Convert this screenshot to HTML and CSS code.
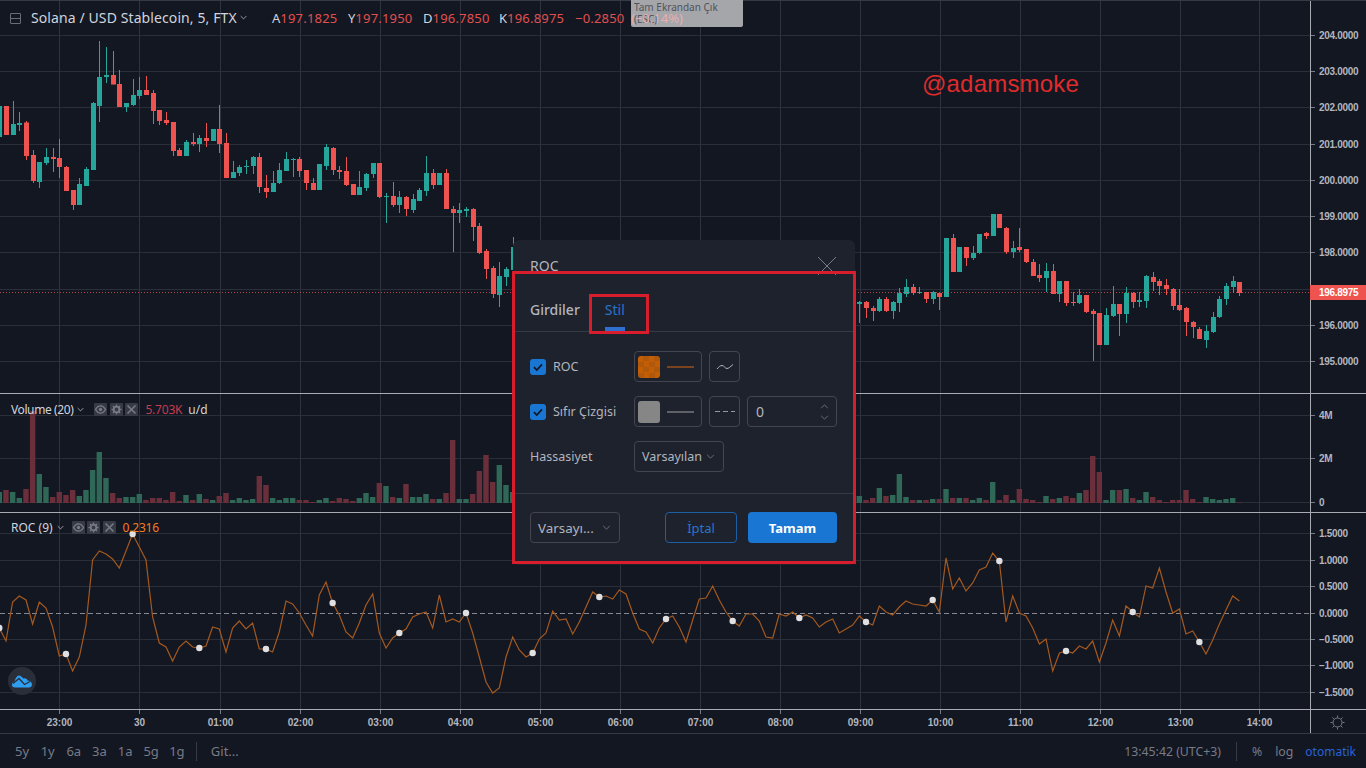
FILE: index.html
```html
<!DOCTYPE html>
<html lang="tr">
<head>
  <meta charset="UTF-8" />
  <meta name="viewport" content="width=device-width, initial-scale=1.0" />
  <title>Solana / USD Stablecoin</title>
  <link rel="stylesheet" href="styles.css">
</head>
<body>

  <svg class="icon-defs" width="0" height="0">
    <symbol id="icon-eye" viewBox="0 0 13 13">
      <path d="M1.500 6.500C3 3.800 4.600 2.800 6.500 2.800s3.500 1 5 3.700c-1.500 2.700-3.100 3.700-5 3.700s-3.500-1-5-3.700z" fill="none" stroke="currentColor" stroke-width="1.300" />
      <circle cx="6.500" cy="6.500" r="1.700" fill="currentColor" />
    </symbol>
    <symbol id="icon-gear" viewBox="0 0 13 13">
      <circle cx="6.500" cy="6.500" r="2.800" fill="none" stroke="currentColor" stroke-width="1.800" />
      <path d="M6.500 1.500v2M6.500 9.500v2M1.500 6.500h2M9.500 6.500h2M3 3l1.400 1.400M8.600 8.600 10 10M10 3 8.600 4.400M4.400 8.600 3 10" stroke="currentColor" stroke-width="1.400" />
    </symbol>
    <symbol id="icon-close" viewBox="0 0 13 13">
      <path d="M2.500 2.500l8 8M10.500 2.500l-8 8" stroke="currentColor" stroke-width="1.600" />
    </symbol>
    <symbol id="icon-chevron" viewBox="0 0 10 6">
      <path d="M1 1l4 4 4-4" fill="none" stroke="currentColor" stroke-width="1" />
    </symbol>
    <symbol id="icon-check" viewBox="0 0 16 16">
      <path d="M4 8.200l2.800 2.800L12 5.400" fill="none" stroke="#131722" stroke-width="1.700" />
    </symbol>
  </svg>

  <div class="tv-chart">

    <!-- Fiyat paneli -->
    <div class="pane pane-main">
      <svg id="mainPlot" class="plot" viewBox="0 1 1366 392"></svg>

      <div class="fullscreen-hint">Tam Ekrandan Çık<br>(ESC)</div>

      <div class="legend legend-main">
        <span class="collapse-box"></span>
        <span class="legend-title">Solana / USD Stablecoin, 5, FTX</span>
        <svg class="chevron"><use href="#icon-chevron" /></svg>
        <span class="ohlc ohlc-a">A<b>197.1825</b></span>
        <span class="ohlc ohlc-y">Y<b>197.1950</b></span>
        <span class="ohlc ohlc-d">D<b>196.7850</b></span>
        <span class="ohlc ohlc-k">K<b>196.8975</b></span>
        <span class="ohlc ohlc-diff"><b>−0.2850</b></span>
        <span class="ohlc ohlc-pct">(−0.14%)</span>
      </div>

      <div class="watermark">@adamsmoke</div>
    </div>

    <!-- Hacim paneli -->
    <div class="pane pane-volume">
      <svg id="volumePlot" class="plot" viewBox="0 394 1366 118"></svg>
      <div class="legend legend-study">
        <span class="study-name study-name-volume">Volume (20)</span>
        <svg class="chevron"><use href="#icon-chevron" /></svg>
        <span class="study-tools study-tools-volume">
          <span class="tool-box"><svg><use href="#icon-eye" /></svg></span>
          <span class="tool-box"><svg><use href="#icon-gear" /></svg></span>
          <span class="tool-box"><svg><use href="#icon-close" /></svg></span>
        </span>
        <span class="study-value volume-value">5.703K</span>
        <span class="study-unit">u/d</span>
      </div>
    </div>

    <!-- ROC paneli -->
    <div class="pane pane-roc">
      <svg id="rocPlot" class="plot" viewBox="0 513 1366 196"></svg>
      <div class="legend legend-study">
        <span class="study-name">ROC (9)</span>
        <svg class="chevron"><use href="#icon-chevron" /></svg>
        <span class="study-tools">
          <span class="tool-box"><svg><use href="#icon-eye" /></svg></span>
          <span class="tool-box"><svg><use href="#icon-gear" /></svg></span>
          <span class="tool-box"><svg><use href="#icon-close" /></svg></span>
        </span>
        <span class="study-value roc-value">0.2316</span>
      </div>
      <div class="tv-logo">
        <svg width="20" height="13" viewBox="0 0 20 13">
          <path d="M0 10C0 8 1 7 2.500 6.500 3.500 3 5 .5 7 .5c2 0 3 2 4.500 3 1.500-.5 3.500 0 4 2 2.500 0 4.500 2 4.500 4s-1.500 3-3 3H3c-2 0-3-1-3-2.500z" fill="#2e9ef0" />
          <path d="M1 8.500 7 3.500l5.500 6L18 6.500" fill="none" stroke="#2a2e39" stroke-width="1.300" />
        </svg>
      </div>
    </div>

    <!-- Zaman ekseni -->
    <div class="pane pane-time">
      <svg id="timeAxis" class="plot" viewBox="0 710 1366 23"></svg>
    </div>

    <!-- Alt çubuk -->
    <div class="bottom-bar">
      <div class="range-group">
        <span class="range-item">5y</span>
        <span class="range-item">1y</span>
        <span class="range-item">6a</span>
        <span class="range-item">3a</span>
        <span class="range-item">1a</span>
        <span class="range-item">5g</span>
        <span class="range-item">1g</span>
        <span class="bar-divider"></span>
        <span class="range-goto">Git...</span>
      </div>
      <div class="status-group">
        <span>13:45:42 (UTC+3)</span>
        <span class="bar-divider"></span>
        <span class="status-pct">%</span>
        <span class="status-log">log</span>
        <span class="status-auto">otomatik</span>
      </div>
    </div>
  </div>

  <!-- Ayarlar penceresi -->
  <div class="dialog">
    <div class="dialog-header">
      <span class="dialog-title">ROC</span>
      <svg class="dialog-close" width="20" height="20" viewBox="0 0 20 20">
        <path d="M1 1l18 18M19 1 1 19" stroke="#787b86" stroke-width="1" fill="none" />
      </svg>
    </div>

    <div class="dialog-tabs">
      <span class="tab">Girdiler</span>
      <span class="tab tab-active">Stil</span>
    </div>

    <div class="dialog-body">
      <div class="field-row">
        <label class="field-label">
          <span class="checkbox"><svg><use href="#icon-check" /></svg></span>
          ROC
        </label>
        <span class="field-controls">
          <span class="swatch-button">
            <span class="swatch swatch-orange"></span>
            <span class="swatch-line swatch-line-orange"></span>
          </span>
          <span class="square-button">
            <svg width="18" height="10" viewBox="0 0 18 10">
              <path d="M1 7c2-2.500 3.500-3.500 5-3.500 2 0 3 3 5 3 1.500 0 3-1.500 6-4" fill="none" stroke="#b2b5be" stroke-width="1" />
            </svg>
          </span>
        </span>
      </div>

      <div class="field-row">
        <label class="field-label">
          <span class="checkbox"><svg><use href="#icon-check" /></svg></span>
          Sıfır Çizgisi
        </label>
        <span class="field-controls">
          <span class="swatch-button">
            <span class="swatch swatch-gray"></span>
            <span class="swatch-line"></span>
          </span>
          <span class="square-button"><span class="dash-sample"></span></span>
          <span class="number-input">
            <span>0</span>
            <span class="stepper">
              <svg class="step-up"><use href="#icon-chevron" /></svg>
              <svg><use href="#icon-chevron" /></svg>
            </span>
          </span>
        </span>
      </div>

      <div class="field-row">
        <span class="field-label">Hassasiyet</span>
        <span class="field-controls">
          <span class="select-box select-precision">Varsayılan
            <svg class="chevron"><use href="#icon-chevron" /></svg>
          </span>
        </span>
      </div>
    </div>

    <div class="dialog-footer">
      <span class="select-box select-template">Varsayı...
        <svg class="chevron"><use href="#icon-chevron" /></svg>
      </span>
      <span class="footer-buttons">
        <button class="btn btn-cancel">İptal</button>
        <button class="btn btn-ok">Tamam</button>
      </span>
    </div>

    <div class="mark-outer"></div>
    <div class="mark-tab"></div>
  </div>

  <script src="chart.js"></script>
</body>
</html>
```

FILE: styles.css
```css
body {
  margin: 0;
  padding: 0;
  background-color: #131722;
  font-family: "Noto Sans", Arial, sans-serif;
  color: #b2b5be;
  overflow: hidden;
}

.icon-defs {
  position: absolute;
}

.tv-chart {
  width: 1366px;
  height: 768px;
  display: flex;
  flex-direction: column;
}

.pane {
  position: relative;
  box-sizing: border-box;
  border-bottom: 1px solid #a9abb2;
}

.pane-main {
  height: 394px;
  border-top: 1px solid #363a45;
}

.pane-volume {
  height: 119px;
}

.pane-roc {
  height: 197px;
}

.pane-time {
  height: 24px;
  border-bottom-color: #363a45;
}

.plot {
  display: block;
  width: 1366px;
  height: 100%;
}

.axis-text {
  font-family: "Liberation Sans", Arial, sans-serif;
  font-size: 10px;
  font-weight: bold;
  letter-spacing: -0.3px;
  fill: #b2b5be;
}

.axis-last {
  fill: #fff;
}

.time-text {
  letter-spacing: 0;
  text-anchor: middle;
}

/* Legendlar */
.legend {
  position: absolute;
  left: 0;
  top: 0;
  white-space: nowrap;
}

.legend-main {
  width: 760px;
  height: 34px;
  z-index: 2;
  font-size: 13px;
  line-height: 34px;
  color: #d1d4dc;
}

.collapse-box {
  position: absolute;
  left: 10px;
  top: 12px;
  width: 9px;
  height: 9px;
  border: 1px solid #6a6d78;
  border-radius: 1px;
}

.collapse-box::after {
  content: "";
  position: absolute;
  left: 0;
  right: 0;
  top: 4px;
  height: 1px;
  background-color: #6a6d78;
}

.legend-title {
  position: absolute;
  left: 31px;
  font-size: 14px;
  letter-spacing: 0.1px;
}

.legend-main .chevron {
  position: absolute;
  left: 240px;
  top: 14px;
}

.chevron {
  width: 7px;
  height: 5px;
}

.ohlc {
  position: absolute;
}

.ohlc b {
  font-weight: normal;
  letter-spacing: 0.2px;
  color: #e0504e;
}

.ohlc-a { left: 272px; }
.ohlc-y { left: 348px; }
.ohlc-d { left: 423px; }
.ohlc-k { left: 499px; }
.ohlc-diff { left: 575px; }

.ohlc-pct {
  left: 631px;
  color: #e6aeb0;
}

.fullscreen-hint {
  position: absolute;
  left: 631px;
  top: -1px;
  z-index: 1;
  box-sizing: border-box;
  width: 112px;
  height: 27px;
  padding: 1px 3px;
  background-color: #a5a6aa;
  border-radius: 0 0 2px 2px;
  font-size: 10px;
  line-height: 12px;
  color: #50525a;
}

.watermark {
  position: absolute;
  left: 922px;
  top: 68px;
  font-family: "Liberation Sans", Arial, sans-serif;
  font-size: 24px;
  letter-spacing: 0.2px;
  line-height: 30px;
  color: #e02b2b;
}

.legend-study {
  display: flex;
  align-items: center;
  left: 11px;
  top: 8px;
  height: 14px;
  font-size: 12px;
  color: #d1d4dc;
}

.pane-roc .legend-study {
  top: 7px;
}

.study-name-volume {
  letter-spacing: -0.4px;
}

.legend-study .chevron {
  margin-left: 4px;
}

.study-tools {
  display: flex;
  gap: 2.500px;
  margin-left: 8px;
}

.study-tools-volume {
  margin-left: 10px;
}

.tool-box {
  width: 13px;
  height: 13px;
  background-color: #363a45;
  color: #787b86;
  border-radius: 1px;
}

.tool-box svg {
  display: block;
  width: 13px;
  height: 13px;
}

.study-value {
  margin-left: 7px;
  letter-spacing: -0.2px;
}

.volume-value {
  color: #c73a50;
}

.roc-value {
  color: #f57c1f;
}

.study-unit {
  margin-left: 6px;
}

.tv-logo {
  position: absolute;
  left: 8px;
  top: 154px;
  width: 28px;
  height: 28px;
  display: flex;
  align-items: center;
  justify-content: center;
  background-color: #2a2e39;
  border-radius: 50%;
}

/* Alt çubuk */
.bottom-bar {
  flex: 1;
  display: flex;
  justify-content: space-between;
  align-items: center;
  padding: 0 10px 0 15px;
  font-size: 13px;
  color: #787b86;
}

.range-group,
.status-group {
  display: flex;
  align-items: center;
}

.range-item {
  width: 25.700px;
}

.bar-divider {
  width: 1px;
  height: 19px;
  background-color: #363a45;
}

.range-group .bar-divider {
  margin: 0 14px 0 1px;
}

.status-group {
  font-size: 12.300px;
}

.status-group .bar-divider {
  margin: 0 15px;
}

.status-log {
  margin-left: 13px;
}

.status-auto {
  margin-left: 12px;
  font-size: 12px;
  color: #2962d6;
}

/* Ayarlar penceresi */
.dialog {
  position: absolute;
  left: 513px;
  top: 240px;
  box-sizing: border-box;
  width: 342px;
  height: 325px;
  background-color: #1e222d;
  border-radius: 6px;
  font-size: 12.500px;
  color: #b2b5be;
}

.dialog-header {
  display: flex;
  justify-content: space-between;
  align-items: flex-start;
  box-sizing: border-box;
  height: 54px;
  padding: 16px 18px 0 17px;
}

.dialog-title {
  font-size: 14px;
  line-height: 19px;
}

.dialog-tabs {
  display: flex;
  gap: 25px;
  box-sizing: border-box;
  height: 38px;
  padding-left: 17px;
  border-bottom: 1px solid #363a45;
  font-size: 14px;
}

.tab {
  position: relative;
  line-height: 31px;
  font-weight: 500;
}

.tab-active {
  color: #2a74c9;
  font-weight: normal;
}

.tab-active::after {
  content: "";
  position: absolute;
  left: 0;
  right: 0;
  bottom: 0;
  height: 4px;
  background-color: #2f6fd0;
}

.dialog-body {
  display: flex;
  flex-direction: column;
  gap: 14px;
  padding: 19px 18px 21px 17px;
  border-bottom: 1px solid #363a45;
}

.field-row {
  display: grid;
  grid-template-columns: 104px 1fr;
  align-items: center;
  height: 31px;
}

.field-label {
  display: flex;
  align-items: center;
  gap: 7px;
}

.field-controls {
  display: flex;
  gap: 7px;
}

.checkbox {
  width: 16px;
  height: 16px;
  background-color: #1976d2;
  border-radius: 3px;
}

.checkbox svg {
  display: block;
  width: 16px;
  height: 16px;
}

.swatch-button,
.square-button,
.number-input,
.select-box {
  display: flex;
  align-items: center;
  box-sizing: border-box;
  height: 31px;
  border: 1px solid #434651;
  border-radius: 4px;
}

.swatch-button {
  width: 68px;
  padding: 0 7px 0 3px;
  gap: 7px;
}

.swatch {
  width: 22px;
  height: 22px;
  border-radius: 3px;
}

.swatch-orange {
  background-color: #c45e05;
  background-image: conic-gradient(#b0590c 25%, transparent 0 50%, #b0590c 0 75%, transparent 0);
  background-size: 11px 11px;
}

.swatch-gray {
  background-color: #868686;
}

.swatch-line {
  flex: 1;
  height: 2px;
  background-color: #5f6168;
}

.swatch-line-orange {
  background-color: #7a4320;
}

.square-button {
  justify-content: center;
  width: 31px;
}

.dash-sample {
  width: 20px;
  height: 1px;
  background-image: repeating-linear-gradient(90deg, #9598a1 0 5px, transparent 5px 8px);
}

.number-input {
  justify-content: space-between;
  width: 90px;
  padding: 0 7px 0 8px;
  font-size: 14px;
}

.stepper {
  display: flex;
  flex-direction: column;
  gap: 6px;
  color: #787b86;
}

.stepper svg {
  display: block;
  width: 9px;
  height: 5px;
}

.step-up {
  transform: rotate(180deg);
}

.select-box {
  justify-content: space-between;
  padding: 0 8px 0 7px;
  width: 90px;
}

.select-template {
  font-size: 13.400px;
}

.select-box .chevron {
  width: 9px;
  color: #787b86;
}

.dialog-footer {
  display: flex;
  justify-content: space-between;
  padding: 18px 18px 0 17px;
}

.footer-buttons {
  display: flex;
  gap: 11px;
}

.btn {
  box-sizing: border-box;
  height: 31px;
  font-family: inherit;
  font-size: 13px;
  border-radius: 4px;
  cursor: pointer;
}

.btn-cancel {
  width: 72px;
  background-color: transparent;
  border: 1px solid #1d5fa5;
  color: #2a74c9;
}

.btn-ok {
  width: 89px;
  background-color: #1976d2;
  border: none;
  color: #fff;
  font-weight: bold;
}

/* Kırmızı işaretler */
.mark-outer,
.mark-tab {
  position: absolute;
  box-sizing: border-box;
  border: 3px solid #d81e2c;
  pointer-events: none;
}

.mark-outer {
  left: -1px;
  top: 31px;
  width: 344px;
  height: 293px;
}

.mark-tab {
  left: 76px;
  top: 54px;
  width: 60px;
  height: 40px;
}
```

FILE: chart.js
```js
// Mum verileri: [tepe, gövde üst, gövde alt, dip, yön] (piksel, 1 = yükseliş)
const leftCandles = [
  [106,106,137,137,1],[106,106,135,135,0],[101,124,135,135,1],[112,123,125,131,1],[121,122.5,156,160,0],
  [150,155,181,183,0],[162,162,182,188,1],[148,157,163,165,1],[148,157,159,172,0],[139,158,167,178,0],
  [166,167,191,191,0],[190,190,205,210,0],[178,184,205,205,1],[167,169,186,186,1],[102,103,170,170,1],
  [41,77,106,122,1],[47,75,77,83,1],[51,75,84.5,84.5,0],[70,84,107,107,0],[103,103,107,112,1],
  [79,95,105,106,1],[77,90,96,99,1],[76,90,95,95,0],[90,93,111,124,0],[110,110,121,125,0],
  [112,120,123,125,0],[122,122,151,156,0],[148,150,156,156,0],[140,142,156,156,1],[133,142,144,146,0],
  [135,138,144,152,1],[123,138,141,147,0],[129,129,141,141,1],[105,129,144,153,0],[133,143,178,178,0],
  [161,172,178,178,1],[165,167,173,176,1],[160,166,167,174,1],[156,157,166,174,1],[153,157,187,193,0],
  [175,188,192,198,0],[171,183,192,192,1],[163,170,183,184,1],[152,159,171,171,1],[158,159,160,177,1],
  [157,159,171,177,0],[170,170,183,190,0],[178,183,190,190,0],[164,164,190,190,1],[144,147,166,170,1],
  [147,148,170,175,0],[166,170,172,179,0],[157,171,185,186,0],[184,184,195,195,0],[171,187,195,195,1],
  [173,174,188,191,1],[163,163,174,178,1],[163,163,197,198,0],[193,196,197,223,1],[182,196,205,207,0],
  [191,197,205,213,1],[196,197,209,216,0],[194,199,210,213,1],[188,190,201,201,1],[156,173,191,196,1],
  [169,173,185,189,0],[173,173,185,185,1],[169,173,209,209,0],[206,209,213,252,0],[203,210,213,223,1],
  [207,209,211,217,1],[208,209,227,241,0],[223,226,253,254,0],[249,251,269,279,0],[266,268,294,298,0],
  [262,276,295,307,1],[267,269,277,286,1],[237,247,270,270,1]
];

const rightCandles = [
  [301,302,304,323,1],[301,302,308,318,0],[306,308,311,321,0],[297,299,311,312,1],[297,299,311,312,0],
  [301,302,311,319,1],[288,293,303,312,1],[279,287,294,297,1],[284,287,293,295,0],[287,292,293,294,1],
  [292,292,299,303,0],[291,292,299,304,1],[293,293,297,310,0],[238,238,297,297,1],[234,238,272,272,0],
  [247,247,272,272,1],[247,247,258,266,0],[246,253,258,260,1],[234,234,253,254,1],[232,233,236,239,0],
  [214,214,236,236,1],[214,214,228,228,0],[227,228,252,254,0],[241,248,252,258,1],[228,247,250,252,0],
  [249,249,262,263,0],[259,262,276,276,0],[264,275,278,282,0],[263,271,278,292,1],[264,271,294,294,0],
  [281,281,294,302,1],[281,281,303,306,0],[292,302,303,306,0],[289,295,303,304,1],[295,295,312,313,0],
  [309,311,314,361,0],[313,313,345,345,0],[308,315,345,345,1],[286,304,316,317,1],[304,304,314,336,0],
  [287,293,314,323,1],[292,293,302,308,0],[292,300,302,307,1],[275,276,301,308,1],[272,277,282,291,0],
  [279,281,286,295,0],[279,285,289,295,0],[288,289,306,310,0],[289,305,310,311,0],[307,308,322,336,0],
  [321,322,327,338,0],[327,329,339,339,0],[325,331,340,348,1],[312,317,332,333,1],[296,299,317,318,1],
  [283,286,299,305,1],[276,281,287,293,1],[282,282,293,296,0]
];

const leftVolume = [
  11,13,11,5,14,92,29,16,6,11,8,13,7,13,33,51,25,10,5,6,6,9,3,5,5,3,11,2,8,3,9,4,3,7,10,3,5,3,4,27,
  18,5,3,5,5,3,3,1,3,5,2,5,4,2,5,10,6,20,17,6,5,19,6,6,9,4,4,10,63,4,4,9,32,48,21,38,18,11
];

const rightVolume = [
  7,3,5,15,7,8,29,6,3,3,3,4,4,14,5,5,5,3,5,3,21,3,8,3,14,4,3,1,7,4,5,7,5,10,13,47,31,3,13,13,14,5,3,
  11,6,3,1,3,3,13,4,1,6,4,3,4,5,0.5
];

const rocLine = [
  628,641,602,596,600,624,602,608,627,656,654,671,657,625,560,551,554,559,568,551,
  534,547,560,617,643,647,661,647,641,647,648,646,627,629,652,628,621,629,623,649,
  649,652,632,601,604,613,625,636,595,582,603,615,632,638,623,605,594,633,648,638,
  633,629,617,614,612,628,595,622,619,622,613,633,657,682,693,688,657,637,650,657,
  653,639,633,611,620,619,634,622,607,592,597,596,599,590,594,613,629,632,643,628,
  619,616,627,642,620,599,598,586,600,612,621,626,614,614,621,637,638,614,616,612,
  618,615,618,627,622,619,633,629,625,616,622,625,606,612,615,607,601,604,605,606,
  600,612,558,589,578,591,583,570,567,553,561,622,596,613,616,628,644,639,671,653,
  651,653,646,649,641,662,643,620,636,606,612,617,586,588,568,592,613,609,634,631,
  642,654,640,624,610,596,601
];

const RIGHT_START = 129;
const GRID_X = [59.5, 139.5, 220.5, 300.5, 380.5, 460.5, 540.5, 620.5, 700.5, 780.5, 860.5, 940.5, 1020.5, 1100.5, 1180.5, 1259.5];
const TIME_LABELS = ['23:00', '30', '01:00', '02:00', '03:00', '04:00', '05:00', '06:00', '07:00', '08:00', '09:00', '10:00', '11:00', '12:00', '13:00', '14:00'];

function candleX(i) {
  return -0.7 + i * 6.667;
}

function gridAndAxis(top, bottom, rows) {
  let out = '';
  GRID_X.forEach(x => {
    out += `<line x1="${x}" x2="${x}" y1="${top}" y2="${bottom}" stroke="#2f333e" />`;
  });
  rows.forEach(row => {
    if (!row.dashed) {
      out += `<line x1="0" x2="1310" y1="${row.y}" y2="${row.y}" stroke="#2a2e39" />`;
    }
    out += `<line x1="1310" x2="1315" y1="${row.y}" y2="${row.y}" stroke="#787b86" />`;
    if (row.label) {
      out += `<text class="axis-text" x="1319" y="${row.y + 3.5}">${row.label}</text>`;
    }
  });
  out += `<line x1="1310.500" x2="1310.500" y1="${top}" y2="${bottom}" stroke="#a9abb2" />`;
  return out;
}

function drawCandle(candle, i) {
  const [high, top, bottom, low, up] = candle;
  const color = up ? '#26a69a' : '#ef5350';
  const x = candleX(i);
  const wick = Math.round(x) + 0.5;
  let out = `<line x1="${wick}" x2="${wick}" y1="${high}" y2="${low}" stroke="${color}" />`;
  out += `<rect x="${wick - 2.5}" y="${top}" width="5" height="${Math.max(bottom - top, 1)}" fill="${color}" />`;
  return out;
}

function drawMain() {
  const rows = [
    [35.5, '204.0000'], [71.5, '203.0000'], [107.5, '202.0000'], [144.5, '201.0000'], [180.5, '200.0000'],
    [216.5, '199.0000'], [252.5, '198.0000'], [289.5, ''], [325.5, '196.0000'], [361.5, '195.0000']
  ].map(([y, label]) => ({ y, label }));

  let out = gridAndAxis(1, 393, rows);
  leftCandles.forEach((c, i) => { out += drawCandle(c, i); });
  rightCandles.forEach((c, i) => { out += drawCandle(c, i + RIGHT_START); });
  out += '<line x1="0" x2="1310" y1="292.500" y2="292.500" stroke="#ef5350" stroke-opacity="0.75" stroke-dasharray="1 2" />';
  out += '<rect x="1310" y="285" width="56" height="15" fill="#ef5350" />';
  out += '<text class="axis-text axis-last" x="1319" y="296">196.8975</text>';
  document.getElementById('mainPlot').innerHTML = out;
}

function drawVolume() {
  const baseline = 503;
  const rows = [[415.5, '4M'], [458.5, '2M'], [502.5, '0']].map(([y, label]) => ({ y, label }));
  let out = gridAndAxis(394, 512, rows);

  const bar = (height, i, up) => {
    const color = up ? '#2f6857' : '#6b2f3b';
    return `<rect x="${candleX(i) - 2.700}" y="${baseline - height}" width="5.400" height="${height}" fill="${color}" />`;
  };
  leftVolume.forEach((h, i) => { out += bar(h, i, leftCandles[i][4]); });
  rightVolume.forEach((h, i) => { out += bar(h, i + RIGHT_START, rightCandles[i][4]); });
  document.getElementById('volumePlot').innerHTML = out;
}

function drawRoc() {
  const rows = [
    [533.5, '1.5000'], [560.5, '1.0000'], [586.5, '0.5000'], [613.5, '0.0000', true],
    [639.5, '−0.5000'], [665.5, '−1.0000'], [692.5, '−1.5000']
  ].map(([y, label, dashed]) => ({ y, label, dashed }));

  let out = gridAndAxis(513, 709, rows);
  out += '<line x1="0" x2="1310" y1="613.500" y2="613.500" stroke="#868993" stroke-dasharray="5 3" />';

  const points = rocLine.map((y, i) => `${candleX(i).toFixed(1)},${y}`).join(' ');
  out += `<polyline points="${points}" fill="none" stroke="#a4591f" stroke-width="1.200" />`;

  rocLine.forEach((y, i) => {
    if (i % 10 === 0) {
      out += `<circle cx="${candleX(i)}" cy="${y}" r="3.200" fill="#e0e0e2" />`;
    }
  });
  document.getElementById('rocPlot').innerHTML = out;
}

function drawTimeAxis() {
  let out = '';
  GRID_X.forEach((x, i) => {
    out += `<line x1="${x}" x2="${x}" y1="710" y2="714" stroke="#787b86" />`;
    out += `<text class="axis-text time-text" x="${x}" y="725.5">${TIME_LABELS[i]}</text>`;
  });
  out += '<line x1="1310.500" x2="1310.500" y1="710" y2="733" stroke="#a9abb2" />';
  out += '<circle cx="1337.500" cy="722.500" r="4.500" fill="none" stroke="#787b86" />';
  out += '<path d="M1337.500 715.500v2M1337.500 727.500v2M1330.500 722.500h2M1342.500 722.500h2M1332.500 717.500l1.500 1.500M1341 726l1.500 1.500M1342.500 717.500 1341 719M1334 726l-1.500 1.500" stroke="#787b86" fill="none" />';
  document.getElementById('timeAxis').innerHTML = out;
}

drawMain();
drawVolume();
drawRoc();
drawTimeAxis();
```
